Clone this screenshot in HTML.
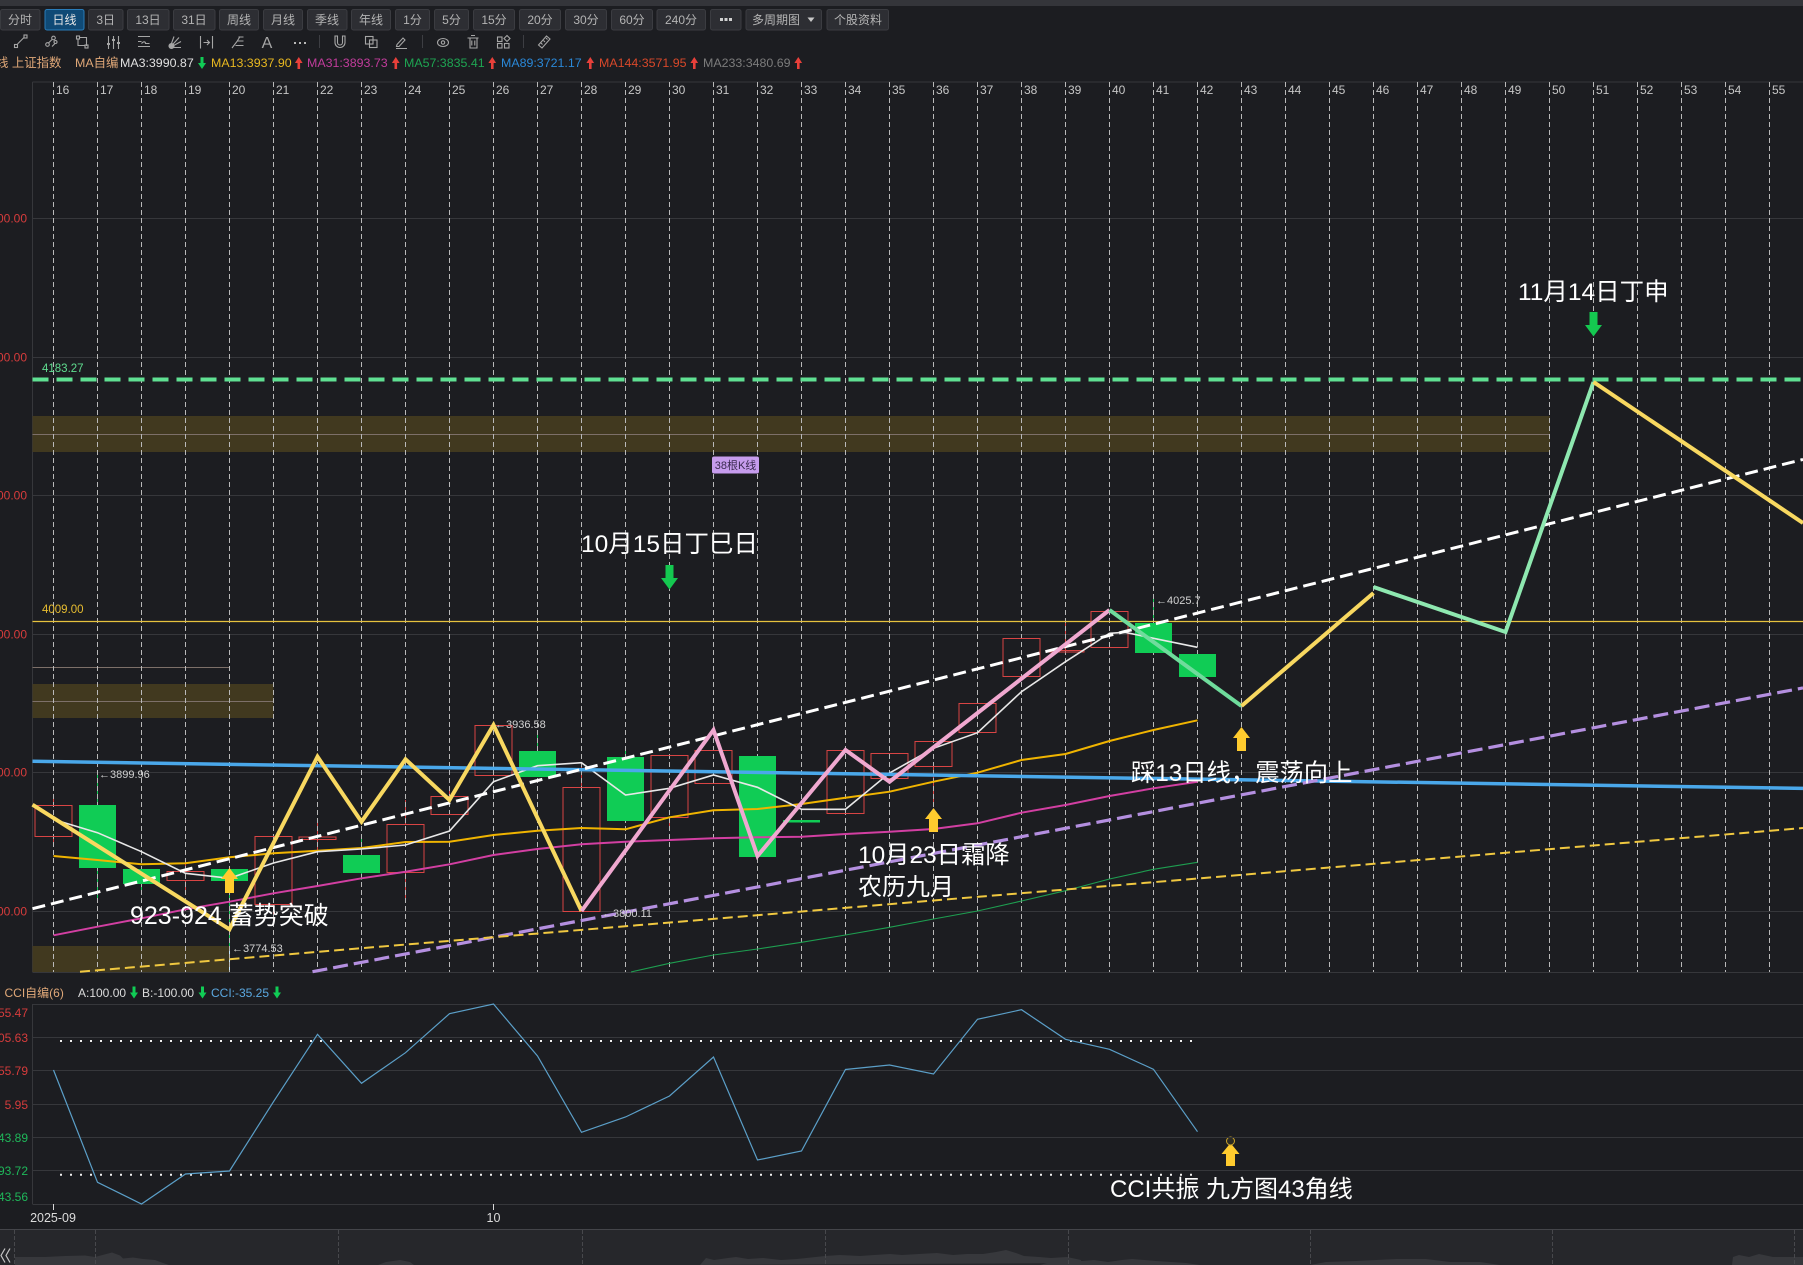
<!DOCTYPE html>
<html lang="zh"><head><meta charset="utf-8"><title>上证指数 日线</title>
<style>
html,body{margin:0;padding:0;background:#1c1d21;width:1803px;height:1265px;overflow:hidden}
svg{display:block;font-family:"Liberation Sans","Noto Sans CJK SC",sans-serif}
.b{fill:#2d2e33;stroke:#3b3c41}
.bt{fill:#b4b4b4;font-size:12px;text-anchor:middle}
.ic{fill:none;stroke:#a6a6a6;stroke-width:1.1}
.n text{fill:#c6c6c6;font-size:12px}
.big{fill:#fff;font-size:24px}
.v{fill:#d2d2d2;font-size:11px}
.r{fill:#d63c3c;font-size:12px;text-anchor:end}
.g{fill:#1fb85a;font-size:12px;text-anchor:end}
.l{font-size:12.4px}
.red{fill:none;stroke:#d84444;stroke-width:1}
.gr{fill:#10cc55}
</style></head><body>
<svg width="1803" height="1265" viewBox="0 0 1803 1265" xmlns="http://www.w3.org/2000/svg">
<rect width="1803" height="1265" fill="#1c1d21"/>
<rect width="1803" height="6" fill="#34353a"/>

<!-- toolbar -->
<g>
<rect class="b" x="0.5" y="9.5" width="39.5" height="20.5" rx="2"/><text class="bt" x="20" y="24">分时</text>
<rect x="45" y="9.5" width="39" height="20.5" rx="2" fill="#0f4a76" stroke="#2a7cb8"/><text class="bt" x="64.5" y="24" style="fill:#e6e6e6">日线</text>
<rect class="b" x="88.5" y="9.5" width="34.5" height="20.5" rx="2"/><text class="bt" x="105.7" y="24">3日</text>
<rect class="b" x="127.5" y="9.5" width="41.5" height="20.5" rx="2"/><text class="bt" x="148" y="24">13日</text>
<rect class="b" x="173.5" y="9.5" width="41.5" height="20.5" rx="2"/><text class="bt" x="194" y="24">31日</text>
<rect class="b" x="219.5" y="9.5" width="39" height="20.5" rx="2"/><text class="bt" x="239" y="24">周线</text>
<rect class="b" x="263.5" y="9.5" width="39" height="20.5" rx="2"/><text class="bt" x="283" y="24">月线</text>
<rect class="b" x="307.5" y="9.5" width="39.5" height="20.5" rx="2"/><text class="bt" x="327" y="24">季线</text>
<rect class="b" x="351.5" y="9.5" width="39" height="20.5" rx="2"/><text class="bt" x="371" y="24">年线</text>
<rect class="b" x="395.5" y="9.5" width="34" height="20.5" rx="2"/><text class="bt" x="412.5" y="24">1分</text>
<rect class="b" x="434.5" y="9.5" width="34" height="20.5" rx="2"/><text class="bt" x="451.5" y="24">5分</text>
<rect class="b" x="473.5" y="9.5" width="41" height="20.5" rx="2"/><text class="bt" x="494" y="24">15分</text>
<rect class="b" x="519.5" y="9.5" width="41" height="20.5" rx="2"/><text class="bt" x="540" y="24">20分</text>
<rect class="b" x="565.5" y="9.5" width="41" height="20.5" rx="2"/><text class="bt" x="586" y="24">30分</text>
<rect class="b" x="611.5" y="9.5" width="41" height="20.5" rx="2"/><text class="bt" x="632" y="24">60分</text>
<rect class="b" x="657" y="9.5" width="48.5" height="20.5" rx="2"/><text class="bt" x="681" y="24">240分</text>
<rect class="b" x="710.5" y="9.5" width="30.5" height="20.5" rx="2"/>
<path d="M720 18h3v3h-3zM724.5 18h3v3h-3zM729 18h3v3h-3z" fill="#d0d0d0"/>
<rect class="b" x="746" y="9.5" width="75.5" height="20.5" rx="2"/><text class="bt" x="776" y="24">多周期图</text><path d="M807.5 17.5h7l-3.5 4.5z" fill="#c8c8c8"/>
<rect class="b" x="827" y="9.5" width="61.5" height="20.5" rx="2"/><text class="bt" x="858" y="24">个股资料</text>
</g>

<!-- icon row -->
<g class="ic">
<path d="M17.5 44l6.5-6.5"/><rect x="14.5" y="44.5" width="3" height="3"/><rect x="24" y="35" width="3" height="3"/>
<path d="M48.5 43l3.5-3.5M52 46.5l3-3"/><circle cx="47.5" cy="44.5" r="1.8"/><circle cx="53.5" cy="38" r="1.8"/><circle cx="55.5" cy="42" r="1.5"/>
<path d="M79 37.5h7.5v8.5M78 39v6.5h7"/><rect x="76.5" y="36" width="3" height="3"/><rect x="85" y="45" width="3" height="3"/>
<path d="M108.500 36v13M113.500 36v13M118.500 36v13"/><path d="M107 44h3M112 40h3M117 43h3" stroke-width="2"/>
<path d="M138 36.500h12M138 41.500h3.500M138 46.500h12"/><path d="M141.500 43.500c2-2.500 4-2 4 0h4"/>
<path d="M170 47.500l9-10M170 47.500l11-6M170 47.500h11M170 47.500l4-11"/><circle cx="171.500" cy="46" r="2.500" fill="#a6a6a6"/>
<path d="M200.500 36v12.500M212.500 36v12.500M203.500 42.500h6M207 40l2.500 2.500L207 45"/>
<path d="M232 48l5-6.500 3-5M238.500 37h5M237 41h6.500M235.500 45.500h8"/>
</g>
<text x="267" y="48" font-size="16" fill="#a6a6a6" text-anchor="middle">A</text>
<path d="M294 42h2v2h-2zM299 42h2v2h-2zM304 42h2v2h-2z" fill="#b8b8b8"/>
<path d="M319.500 35v13M422.500 35v13M523.500 35v13" stroke="#3d3e43"/>
<g class="ic">
<path d="M335 36v6.500a5 5 0 0 0 10 0V36h-2.500v6.500a2.500 2.500 0 0 1-5 0V36z"/>
<rect x="365.500" y="36.500" width="7.500" height="7.500"/><rect x="369.500" y="40" width="7.500" height="7.500"/>
<path d="M397 44.500l6-6.500 2 2-6 6.500h-2.500zM396 48.500h11"/>
<ellipse cx="443" cy="42.500" rx="5.500" ry="4"/><circle cx="443" cy="42.500" r="1.700"/>
<path d="M467.500 38h11M470 38v10h7V38M471 35.500h4M471.800 40.500v5M474.800 40.500v5"/>
<rect x="497.500" y="37" width="4.500" height="4.500"/><rect x="497.500" y="43.500" width="4.500" height="4.500"/><rect x="504.500" y="43.500" width="4.500" height="4.500"/><path d="M507 35.500l3 3-3 3-3-3z"/>
<path d="M538.500 45l8-9 3.500 3-8 9zM541 43l1.500 1.500M543.500 40.500l1.500 1.500M546 38l1.500 1.500"/>
</g>

<!-- legend -->
<text class="l" x="-4" y="67" fill="#e0a878">线 上证指数</text>
<text class="l" x="75" y="67" fill="#e0a878">MA自编</text>
<text class="l" x="120" y="67" fill="#e0e0e0">MA3:3990.87</text>
<path d="M200.500 57h3v6h2.500l-4 6-4-6h2.500z" fill="#10cc55"/>
<text class="l" x="211" y="67" fill="#e8b820">MA13:3937.90</text>
<path d="M297.500 69h2.600v-6h2.500l-3.800-6-3.900 6h2.600z" fill="#e8403a"/>
<text class="l" x="307" y="67" fill="#c23c9c">MA31:3893.73</text>
<path d="M394.500 69h2.600v-6h2.500l-3.800-6-3.900 6h2.600z" fill="#e8403a"/>
<text class="l" x="404" y="67" fill="#1ea552">MA57:3835.41</text>
<path d="M491 69h2.600v-6h2.500l-3.800-6-3.900 6h2.600z" fill="#e8403a"/>
<text class="l" x="501" y="67" fill="#2a88d8">MA89:3721.17</text>
<path d="M589 69h2.600v-6h2.500l-3.800-6-3.900 6h2.600z" fill="#e8403a"/>
<text class="l" x="599" y="67" fill="#d8482a">MA144:3571.95</text>
<path d="M693 69h2.600v-6h2.500l-3.800-6-3.900 6h2.600z" fill="#e8403a"/>
<text class="l" x="703" y="67" fill="#7c7c7c">MA233:3480.69</text>
<path d="M797 69h2.600v-6h2.500l-3.800-6-3.900 6h2.600z" fill="#e8403a"/>

<!-- grid -->
<path d="M32.500 82V972M32.500 82H1803M32.500 972.500H1803M32.500 218.500H1803M32.500 357.500H1803M32.500 495.500H1803M32.500 634.500H1803M32.500 772.500H1803M32.500 911.500H1803" stroke="#36373b" fill="none"/>
<text class="r" x="27" y="222.500">00.00</text><text class="r" x="27" y="361.500">00.00</text><text class="r" x="27" y="499.500">00.00</text><text class="r" x="27" y="638.500">00.00</text><text class="r" x="27" y="776.500">00.00</text><text class="r" x="27" y="915.500">00.00</text>

<!-- bands -->
<rect x="32.500" y="416" width="1517.500" height="36" fill="#41391f"/>
<path d="M32.500 434.500H1550" stroke="#7d7069"/>
<rect x="32.500" y="684" width="241" height="34" fill="#41391f"/>
<path d="M32.500 701.500H273.500" stroke="#7d7069"/>
<path d="M32.500 667.500H229" stroke="#7d7069"/>
<rect x="32.500" y="946" width="197" height="26" fill="#41391f"/>

<!-- candle wicks (under the dashed grid) -->
<g stroke-width="1" fill="none">
<path stroke="#d84444" d="M53.500 797V805M53.500 837V843M185.500 860V871M185.500 881V890M273.500 905V925M317.500 820V837M317.500 839V850M405.500 800V824M405.500 873V900M449.500 790V796M581.500 765V787M669.500 817V830M933.500 766V806M1065.500 621V651"/>
<path stroke="#10cc55" d="M97.500 772V805M97.500 868V900M141.500 884V893M229.500 881V946M361.500 838V855M361.500 873V880M537.500 733V751M625.500 750V757M1153.500 595V623"/>
<path stroke="#bfe4ff" d="M229.500 946V972"/>
</g>

<!-- vertical dashed -->
<path stroke="#b9b9b9" stroke-dasharray="5 3" fill="none" d="M53.500 82V972M97.500 82V972M141.500 82V972M185.500 82V972M229.500 82V972M273.500 82V972M317.500 82V972M361.500 82V972M405.500 82V972M449.500 82V972M493.500 82V972M537.500 82V972M581.500 82V972M625.500 82V972M669.500 82V972M713.500 82V972M757.500 82V972M801.500 82V972M845.500 82V972M889.500 82V972M933.500 82V972M977.500 82V972M1021.500 82V972M1065.500 82V972M1109.500 82V972M1153.500 82V972M1197.500 82V972M1241.500 82V972M1285.500 82V972M1329.500 82V972M1373.500 82V972M1417.500 82V972M1461.500 82V972M1505.500 82V972M1549.500 82V972M1593.500 82V972M1637.500 82V972M1681.500 82V972M1725.500 82V972M1769.500 82V972"/>
<g class="n">
<text x="56" y="94">16</text><text x="100" y="94">17</text><text x="144" y="94">18</text><text x="188" y="94">19</text><text x="232" y="94">20</text><text x="276" y="94">21</text><text x="320" y="94">22</text><text x="364" y="94">23</text><text x="408" y="94">24</text><text x="452" y="94">25</text><text x="496" y="94">26</text><text x="540" y="94">27</text><text x="584" y="94">28</text><text x="628" y="94">29</text><text x="672" y="94">30</text><text x="716" y="94">31</text><text x="760" y="94">32</text><text x="804" y="94">33</text><text x="848" y="94">34</text><text x="892" y="94">35</text><text x="936" y="94">36</text><text x="980" y="94">37</text><text x="1024" y="94">38</text><text x="1068" y="94">39</text><text x="1112" y="94">40</text><text x="1156" y="94">41</text><text x="1200" y="94">42</text><text x="1244" y="94">43</text><text x="1288" y="94">44</text><text x="1332" y="94">45</text><text x="1376" y="94">46</text><text x="1420" y="94">47</text><text x="1464" y="94">48</text><text x="1508" y="94">49</text><text x="1552" y="94">50</text><text x="1596" y="94">51</text><text x="1640" y="94">52</text><text x="1684" y="94">53</text><text x="1728" y="94">54</text><text x="1772" y="94">55</text>
</g>

<!-- horizontal levels -->
<path d="M32.500 621.500H1803" stroke="#e6c23e" stroke-width="1.200"/>
<text x="42" y="613" font-size="11.500" fill="#e6bc30">4009.00</text>
<text x="42" y="372" font-size="11.500" fill="#5fdc8f">4183.27</text>
<rect x="712" y="456.500" width="47" height="17" rx="2" fill="#c69ced"/>
<text x="735.500" y="469" font-size="11" fill="#3a2a50" text-anchor="middle">38根K线</text>

<!-- red candles -->
<g class="red">
<rect x="35" y="805.500" width="37" height="31"/>
<rect x="167" y="871.500" width="37" height="9"/>
<rect x="255" y="836.500" width="37" height="68"/>
<rect x="299" y="837" width="37" height="2.500"/>
<rect x="387" y="824.500" width="37" height="48"/>
<rect x="431" y="796.500" width="37" height="18"/>
<rect x="475" y="725.500" width="37" height="50"/>
<rect x="563" y="787.500" width="37" height="124"/>
<rect x="651" y="755.500" width="37" height="62"/>
<rect x="695" y="750.500" width="37" height="33"/>
<rect x="827" y="750.500" width="37" height="63"/>
<rect x="871" y="753.500" width="37" height="25"/>
<rect x="915" y="741.500" width="37" height="25"/>
<rect x="959" y="703.500" width="37" height="29"/>
<rect x="1003" y="638.500" width="37" height="38"/>
<rect x="1047" y="650.500" width="37" height="1.500"/>
<rect x="1091" y="611.500" width="37" height="36"/>
</g>
<!-- green candles -->
<g class="gr">
<rect x="79" y="805" width="37" height="63"/>
<rect x="123" y="869" width="37" height="15"/>
<rect x="211" y="869" width="37" height="12"/>
<rect x="343" y="855" width="37" height="18"/>
<rect x="519" y="751" width="37" height="26"/>
<rect x="607" y="757" width="37" height="64"/>
<rect x="739" y="756" width="37" height="101"/>
<rect x="783" y="820" width="37" height="2.500"/>
<rect x="1135" y="623" width="37" height="30"/>
<rect x="1179" y="654" width="37" height="23"/>
</g>

<!-- MA lines -->
<polyline fill="none" stroke="#1e9e50" stroke-width="1.100" points="631,972 669.500,963.300 713.500,955 757.500,949 801.500,942.300 845.500,935 889.500,927.300 933.500,919 977.500,911 1021.500,901 1065.500,890.700 1109.500,879 1153.500,869.300 1197.500,862.300"/>
<polyline fill="none" stroke="#d23fa2" stroke-width="2" points="53.500,935.300 97.500,926.700 141.500,918.300 185.500,909.300 229.500,901.700 273.500,893.300 317.500,886 361.500,878.300 405.500,871.700 449.500,864.300 493.500,855 537.500,849 581.500,844.300 625.500,841.700 669.500,840 713.500,838.300 757.500,837.300 801.500,836.700 845.500,834 889.500,831.700 933.500,829 977.500,823.300 1021.500,812.700 1065.500,805 1109.500,796 1153.500,788.300 1197.500,781.700"/>
<polyline fill="none" stroke="#f0b400" stroke-width="2" points="53.500,856 97.500,860 141.500,864.300 185.500,863.300 229.500,857.300 273.500,853.300 317.500,850.700 361.500,848 405.500,842 449.500,841.700 493.500,835 537.500,830.700 581.500,828 625.500,829.300 669.500,817.300 713.500,810.300 757.500,809 801.500,804 845.500,797.700 889.500,791.700 933.500,781.700 977.500,772.700 1021.500,760 1065.500,754 1109.500,741 1153.500,730 1197.500,720.300"/>
<polyline fill="none" stroke="#e8e8e8" stroke-width="1.600" points="62,822 97.500,832.700 141.500,851.700 185.500,873.300 229.500,878.300 273.500,863 317.500,851.700 361.500,849 405.500,845 449.500,831 493.500,781.700 537.500,765.700 581.500,762.700 625.500,795 669.500,788.300 713.500,775 757.500,787.300 801.500,809.300 845.500,809.300 889.500,773 933.500,748.300 977.500,732.700 1021.500,691.700 1065.500,661.700 1109.500,633.300 1125,632.300 1153.500,638.300 1197.500,647.300"/>

<!-- trend lines -->
<line x1="32.500" y1="379.500" x2="1803" y2="379.500" stroke="#5fe092" stroke-width="4" stroke-dasharray="16 8"/>
<line x1="32.500" y1="761.300" x2="1803" y2="788.400" stroke="#4aa8ea" stroke-width="3.500"/>
<line x1="312.500" y1="971.700" x2="1803" y2="687.900" stroke="#b48fe0" stroke-width="3.200" stroke-dasharray="15 6"/>
<line x1="80" y1="971.700" x2="1803" y2="828" stroke="#f0c840" stroke-width="2" stroke-dasharray="10 5"/>
<line x1="32.500" y1="908.700" x2="1803" y2="459.400" stroke="#ffffff" stroke-width="3" stroke-dasharray="13 6"/>

<!-- zigzag -->
<g fill="none" stroke-width="4" stroke-linejoin="miter">
<polyline stroke="#f8d860" points="32.500,804.700 229.500,929.300 317.500,756.700 361.500,821.700 405.500,759.300 449.500,800 493.500,725 581.500,911"/>
<polyline stroke="#f0a8d0" points="581.500,911 713.500,730 757.500,856 845.500,750 889.500,781.700 1109.500,610"/>
<polyline stroke="#6fdc9c" points="1109.500,610 1241.500,706"/>
<polyline stroke="#f8d860" points="1241.500,706 1373.500,593"/>
<polyline stroke="#8ee8b0" points="1373.500,587 1505.500,632 1593.500,382"/>
<polyline stroke="#f8d860" points="1593.500,382 1803,523"/>
</g>

<!-- arrows -->
<g fill="#ffcb2e">
<path d="M229.500 868l8.500 11h-4v14h-9V879h-4z"/>
<path d="M933.500 808l8.500 11h-4v13h-9V819h-4z"/>
<path d="M1241.500 727l8.500 11h-4v13h-9V738h-4z"/>
<path d="M1230.500 1143l9 11h-4.500v12h-9v-12h-4.500z"/>
</g>
<ellipse cx="1230.500" cy="1141" rx="4" ry="4" fill="#2b2a22" stroke="#caa32a"/>
<g fill="#14c850">
<path d="M1589.500 312h8v13h4.500l-8.500 11.500-8.500-11.500h4.500z"/>
<path d="M665.500 565h8v13h4.500l-8.500 11.500-8.500-11.500h4.500z"/>
</g>

<!-- value labels -->
<text class="v" x="99" y="778">←3899.96</text>
<text class="v" x="232" y="952">←3774.53</text>
<text class="v" x="495" y="728">←3936.58</text>
<text class="v" x="602" y="917">←3800.11</text>
<text class="v" x="1156" y="604">←4025.7</text>

<!-- annotations -->
<text class="big" x="130" y="924" style="font-size:25px">923-924 蓄势突破</text>
<text class="big" x="581" y="552" style="font-size:24.500px">10月15日丁巳日</text>
<text class="big" x="1518" y="300" style="font-size:24.500px">11月14日丁申</text>
<text class="big" x="858" y="863" style="font-size:24.400px">10月23日霜降</text>
<text class="big" x="858" y="895">农历九月</text>
<text class="big" x="1131" y="781" style="font-size:24.300px">踩13日线，震荡向上</text>

<!-- CCI panel -->
<text x="4.500" y="997" font-size="12" fill="#e0a878">CCI自编(6)</text>
<text x="78" y="997" font-size="12" fill="#dcdcdc">A:100.00</text>
<path d="M132.500 986.500h3v6h2.500l-4 6-4-6h2.500z" fill="#10cc55"/>
<text x="142" y="997" font-size="12" fill="#dcdcdc">B:-100.00</text>
<path d="M201 986.500h3v6h2.500l-4 6-4-6h2.500z" fill="#10cc55"/>
<text x="211" y="997" font-size="12" fill="#5ba8e0">CCI:-35.25</text>
<path d="M275.500 986.500h3v6h2.500l-4 6-4-6h2.500z" fill="#10cc55"/>

<path d="M32.500 1004.500H1803M32.500 1037.500H1803M32.500 1070.500H1803M32.500 1104.500H1803M32.500 1137.500H1803M32.500 1170.500H1803M32.500 1204.500H1803M32.500 1004V1204" stroke="#36373b" fill="none"/>
<text class="r" x="28" y="1017">55.47</text>
<text class="r" x="28" y="1042">05.63</text>
<text class="r" x="28" y="1075">55.79</text>
<text class="r" x="28" y="1109">5.95</text>
<text class="g" x="28" y="1142">43.89</text>
<text class="g" x="28" y="1175">93.72</text>
<text class="g" x="28" y="1201">43.56</text>

<line x1="60" y1="1041" x2="1193" y2="1041" stroke="#f0f0f0" stroke-width="2" stroke-dasharray="2 8"/>
<line x1="60" y1="1174.700" x2="1193" y2="1174.700" stroke="#f0f0f0" stroke-width="2" stroke-dasharray="2 8"/>
<polyline fill="none" stroke="#5b9fc8" stroke-width="1.200" points="53.500,1070 97.500,1182.300 141.500,1204 185.500,1174 229.500,1171 273.500,1101.700 317.500,1034.300 361.500,1083.300 405.500,1052.700 449.500,1013.700 493.500,1004 537.500,1056 581.500,1132.300 625.500,1117 669.500,1096 713.500,1057 757.500,1160 801.500,1151 845.500,1069.500 889.500,1065 933.500,1074 977.500,1019.300 1021.500,1009.700 1065.500,1039.300 1109.500,1049.300 1153.500,1069.300 1197.500,1131.700"/>
<text class="big" x="1110" y="1197">CCI共振 九方图43角线</text>

<path d="M53.500 1204V1210M493.500 1204V1210" stroke="#d8d8d8"/>
<text x="53" y="1222" font-size="12.500" fill="#dcdcdc" text-anchor="middle">2025-09</text>
<text x="493.500" y="1222" font-size="12.500" fill="#dcdcdc" text-anchor="middle">10</text>

<!-- navigator -->
<rect x="0" y="1229" width="1803" height="36" fill="#26272b"/>
<path d="M0 1229.500H1803" stroke="#44454a"/>
<path d="M15 1257h30l20-1 20-.5 10 1.500 17-4.500 8 3 3 3 10-1 10 1.500 12 1 8 3 6 2H15zM378 1265l8-3 14-2 10 2 4 3zM700 1265l6-7 8 2 14-2 8-1 12 2 15-1 18 2 16-1 28-3 15-1 20 1 14-1 16-1 12 1 17-1 18-1 16 2 14-1 16 0 13-2 10-2 10 3 8 3 15 1 12 1 16-1 14 3v3z" fill="#37383c"/>
<path d="M1040 1265l18-5 10-1 14 2 12-1 14 2 14-2 10-1 24 2 30 2 14 2zM1310 1265l16-3 30-1 40-2 30 0 24 3 30 0 20 3zM1732 1265l1-8 6-2 10 2 10-3 14 3 14 0 16 0v8z" fill="#37383c"/>
<path stroke="#47484c" stroke-dasharray="4 2" fill="none" d="M14.500 1230V1265M95.500 1230V1265M338.500 1230V1265M582.500 1230V1265M825.500 1230V1265M1068.500 1230V1265M1310.500 1230V1265M1552.500 1230V1265M1794.500 1230V1265"/>
<path d="M5 1248.500l-4 7 4 7M10 1248.500l-4 7 4 7" fill="none" stroke="#c4c4c4" stroke-width="1.200"/>
</svg>
</body></html>
